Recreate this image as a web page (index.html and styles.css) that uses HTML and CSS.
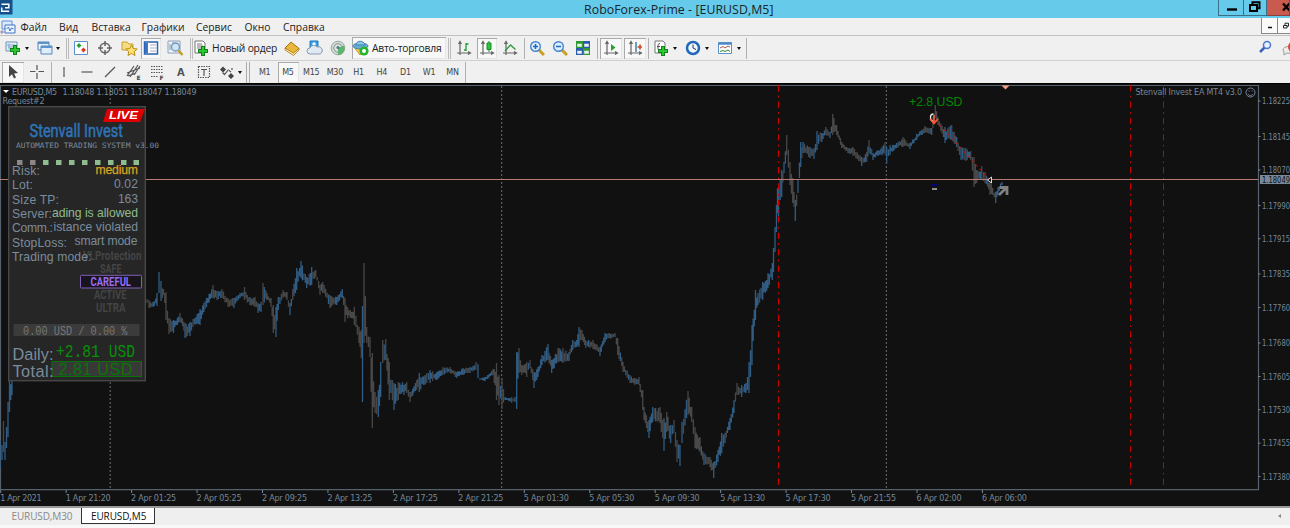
FILE: index.html
```html
<!DOCTYPE html>
<html lang="ru">
<head>
<meta charset="utf-8">
<title>RoboForex-Prime - [EURUSD,M5]</title>
<link rel="stylesheet" href="styles.css">
</head>
<body>
<header class="title">
  <svg class="logo" width="13" height="15" viewBox="0 0 13 15"><rect width="12.5" height="14.5" fill="#174f8c"/><path d="M1.500 4.200h7.300v3.600H5M1.700 12V7.500M1.700 11.200h7.500" fill="none" stroke="#fff" stroke-width="1.500"/></svg>
  <h1>RoboForex-Prime - [EURUSD,M5]</h1>
  <div class="winbtns">
    <span class="wb min"><svg width="24" height="16"><path d="M8 9.500h10" stroke="#000" stroke-width="2.400"/></svg></span>
    <span class="wb max"><svg width="22" height="16"><path d="M6 5h7v6h-7zM8.500 4V2.300h7v6H13" fill="none" stroke="#000" stroke-width="2"/></svg></span>
    <span class="wb close"><svg width="26" height="16"><path d="M16 3.500l6.500 7M22.500 3.500l-6.500 7" stroke="#000" stroke-width="2.300"/></svg></span>
  </div>
</header>
<nav class="menu">
  <svg width="16" height="16" viewBox="0 0 16 16"><path d="M2 2h10v8H2z" fill="#dceafc" stroke="#5b8ed6"/><path d="M5 6h10v8H5z" fill="#eef5ff" stroke="#3f74c4"/><path d="M6.500 10l2-2 1.500 4 1.500-3 2 1" fill="none" stroke="#3f74c4"/><path d="M0 13h4M2 11v4" stroke="#88a"/></svg>
  <span>Файл</span><span>Вид</span><span>Вставка</span><span>Графики</span><span>Сервис</span><span>Окно</span><span>Справка</span>
  <div class="mdi"><i><svg width="16" height="15"><path d="M6 9.500h4" stroke="#111" stroke-width="1.500"/></svg></i><i><svg width="20" height="15"><path d="M5.500 7.500h3.500v2.500H5.500zM7 7V5.200h3.500v3H9" fill="none" stroke="#222"/></svg></i></div>
</nav>
<div class="bar">
  <span class="c w3"></span>
  <span class="c w20"><svg width="18" height="16"><path d="M2 2h11v9H2z" fill="#e4f0fa" stroke="#6d94b8"/><path d="M3 5h8M4 7h5M5 3.500v6" stroke="#88a8c8"/><path d="M11 5v10M6 10h10" stroke="#14801c" stroke-width="4"/><path d="M11 6v8M7 10h8" stroke="#2cc832" stroke-width="2"/></svg></span>
  <span class="c w8"><b class="dd"></b></span><span class="c w5"></span>
  <span class="c w18"><svg width="16" height="16"><path d="M1 2h11v8H1z" fill="#eaf3fc" stroke="#5287bd"/><path d="M4 6h11v8H4z" fill="#e1edf9" stroke="#5287bd"/><path d="M1 3h11M4 7h11" stroke="#5c94cc" stroke-width="2"/></svg></span>
  <span class="c w8"><b class="dd"></b></span><span class="c w11"><b class="sep dbl"></b></span>
  <span class="c w16"><svg width="16" height="16"><path d="M1.500 1.500h13v13h-13z" fill="#fff" stroke="#5b91d0"/><path d="M6 3l2.500 2.500L6 8 3.500 5.500z" fill="#1da62b"/><path d="M10.500 7.500L13 10l-2.500 2.500L8 10z" fill="#dc3a24"/></svg></span>
  <span class="c w4"></span>
  <span class="c w24"><svg width="16" height="16"><circle cx="8" cy="8" r="4.800" fill="none" stroke="#666" stroke-width="1.500"/><path d="M8 1v5M8 10v5M1 8h5M10 8h5" stroke="#666" stroke-width="1.500"/></svg></span>
  <span class="c w24"><svg width="18" height="16"><path d="M2 2h5l2 2h4v6H2z" fill="#f4dc80" stroke="#c9a030"/><path d="M11.500 5l1.700 3.500 4 .5-3 2.600.8 3.900-3.500-2-3.500 2 .8-3.900-3-2.600 4-.5z" fill="#ffe26a" stroke="#b88c1c"/></svg></span>
  <span class="c w20 on"><svg width="16" height="16"><path d="M1.500 2h13v12h-13z" fill="#fff" stroke="#2962ae" stroke-width="1.500"/><path d="M3.500 3v10" stroke="#3a76c8" stroke-width="3"/><path d="M7 5h6M7 8h6M7 11h6" stroke="#aac"/></svg></span>
  <span class="c w28"><svg width="18" height="16"><path d="M2 1h12v12H2z" fill="#eef4fa" stroke="#8aa0b8"/><path d="M4 4v6M7 2v5" stroke="#79a"/><circle cx="9.500" cy="7" r="4" fill="#cfe4f4" stroke="#6f94b6" stroke-width="1.300"/><path d="M12.500 10.500l4 4.500" stroke="#c79a20" stroke-width="2.500"/></svg></span>
  <span class="c w4"><b class="sep dbl"></b></span>
  <span class="c w16"><svg width="16" height="16"><path d="M2 1h8l2 2v10H2z" fill="#fff" stroke="#777"/><path d="M4 4h5M4 6h6M4 8h4" stroke="#777"/><path d="M10 6v10M5 11h10" stroke="#14801c" stroke-width="4"/><path d="M10 7v8M6 11h8" stroke="#2cc832" stroke-width="2"/></svg></span>
  <span class="c w72 label order">Новый ордер</span>
  <span class="c w22"><svg width="16" height="16"><path d="M1 8l6-6 8 6.500L9.500 14z" fill="#e9b73c" stroke="#a87412"/><path d="M1 8v2l8.500 5.500L15 10V8.500L9.500 13z" fill="#fbe6a4" stroke="#a87412" stroke-width=".8"/></svg></span>
  <span class="c w24"><svg width="18" height="16"><path d="M4 1h8v7H4z" fill="#36a0e8" stroke="#1d78c4"/><circle cx="8" cy="4" r="1.700" fill="#fff"/><path d="M4 14a3 3 0 0 1 0-6 4 4 0 0 1 7-1 3.500 3.500 0 0 1 3 7z" fill="#e0e8f1" stroke="#8b9db4"/></svg></span>
  <span class="c w22"><svg width="16" height="16"><circle cx="8" cy="8" r="6.800" fill="#d4dcd8" stroke="#98a4a0"/><circle cx="8" cy="8" r="4.200" fill="#dde4df" stroke="#7f908a"/><path d="M8 8v7c3.500 0 6.500-2.500 6.500-6.500 0-1-.3-2-.8-3z" fill="#5db56c"/><circle cx="8" cy="7.500" r="1.600" fill="#4c7c88"/></svg></span>
  <span class="c w3"></span>
  <span class="auto on"><svg width="18" height="16"><path d="M2 7l6 8 7-7z" fill="#f6d04c" stroke="#c49a2c"/><ellipse cx="8.500" cy="6" rx="7.500" ry="3" fill="#6aacd6" stroke="#3f82ae"/><path d="M4 5c0-5 8-5 9 0z" fill="#8cc6e6" stroke="#3f82ae"/><circle cx="12" cy="11" r="4.600" fill="#25b52e"/><circle cx="12" cy="11" r="2" fill="#fff"/></svg><em>Авто-торговля</em></span>
  <span class="c w6"><b class="sep dbl"></b></span>
  <span class="c w24"><svg width="16" height="16"><path d="M4 2v13M1 13h13M2.500 4L4 1.500 5.500 4M12 11.500L14.500 13 12 14.500" class="ax"/><path d="M10 3v8M10 4h2.500M8 10h2" stroke="#219c2d" fill="none" stroke-width="1.300"/></svg></span>
  <span class="c w1"></span>
  <span class="c w20 on"><svg width="16" height="16"><path d="M4 2v13M1 13h13M2.500 4L4 1.500 5.500 4M12 11.500L14.500 13 12 14.500" class="ax"/><path d="M10 1v11" stroke="#198a25"/><path d="M8 3h4v6.500H8z" fill="#2bc63a" stroke="#198a25"/></svg></span>
  <span class="c w26"><svg width="16" height="16"><path d="M4 2v13M1 13h13M2.500 4L4 1.500 5.500 4M12 11.500L14.500 13 12 14.500" class="ax"/><path d="M3 11L8.500 5l5 4.500" stroke="#2c9a38" fill="none" stroke-width="1.300"/></svg></span>
  <span class="c w3"><b class="sep"></b></span>
  <span class="c w22"><svg width="16" height="16"><path d="M10 10l5 5" stroke="#c99e24" stroke-width="3"/><circle cx="6.500" cy="6.500" r="4.800" fill="#dcefff" stroke="#3f82cc" stroke-width="1.400"/><path d="M4 6.500h5M6.500 4v5" stroke="#2466ba" stroke-width="1.500"/></svg></span>
  <span class="c w24"><svg width="16" height="16"><path d="M10 10l5 5" stroke="#c99e24" stroke-width="3"/><circle cx="6.500" cy="6.500" r="4.800" fill="#dcefff" stroke="#3f82cc" stroke-width="1.400"/><path d="M4 6.500h5" stroke="#2466ba" stroke-width="1.500"/></svg></span>
  <span class="c w22"><svg width="16" height="16"><path d="M1 1h7v7H1zM8 8h7v7H8z" fill="#2f9a2f"/><path d="M8 1h7v7H8zM1 8h7v7H1z" fill="#2a5cae"/><path d="M2.200 3.800h4.600v3H2.200zM9.200 3.800h4.600v3H9.200zM2.200 10.800h4.600v3H2.200zM9.200 10.800h4.600v3H9.200z" fill="#e8f2f4"/></svg></span>
  <span class="c w6"><b class="sep"></b></span>
  <span class="c w22 on"><svg width="16" height="16"><path d="M4 2v13M1 13h13M2.500 4L4 1.500 5.500 4M12 11.500L14.500 13 12 14.500" class="ax"/><path d="M8 4l4.500 3.500L8 11z" fill="#22a530"/></svg></span>
  <span class="c w2"></span>
  <span class="c w22 on"><svg width="16" height="16"><path d="M4 2v13M1 13h13M2.500 4L4 1.500 5.500 4M12 11.500L14.500 13 12 14.500" class="ax"/><path d="M9 2v10" stroke="#246ba0" stroke-width="1.300"/><path d="M15 7h-4.500M13 4.500v5" stroke="#cf4a20" fill="none" stroke-width="1.600"/></svg></span>
  <span class="c w5"><b class="sep"></b></span>
  <span class="c w20"><svg width="16" height="16"><path d="M2 1h8l2 2v10H2z" fill="#fff" stroke="#777"/><path d="M7 3.500c-2 0-2 1-2 3v3M4 6.500h3" stroke="#555" fill="none"/><path d="M10 6v10M5 11h10" stroke="#14801c" stroke-width="4"/><path d="M10 7v8M6 11h8" stroke="#2cc832" stroke-width="2"/></svg></span>
  <span class="c w7"><b class="dd"></b></span><span class="c w4"></span>
  <span class="c w22"><svg width="16" height="16"><circle cx="8" cy="8" r="6" fill="#eef6ff" stroke="#2367b8" stroke-width="2.500"/><path d="M8 4.500V8l3 1.500" fill="none" stroke="#333"/></svg></span>
  <span class="c w5"><b class="dd"></b></span><span class="c w5"></span>
  <span class="c w22"><svg width="16" height="16"><path d="M1.500 2.500h13v11h-13z" fill="#fff" stroke="#5a92c8"/><path d="M1.500 3.500h13" stroke="#4f8bc8" stroke-width="2.500"/><path d="M3 8l3-1.500 2 1.500 3-2 2 1" stroke="#a54" fill="none"/><path d="M3 11.500l3-1 2 1 3-1.500 2 1.500" stroke="#383" fill="none"/></svg></span>
  <span class="c w5"><b class="dd"></b></span><span class="c w5"></span><span class="c w1"><b class="sep"></b></span>
  <div class="right"><svg width="40" height="18"><path d="M3 13l5-5" stroke="#3a62b8" stroke-width="2.500"/><circle cx="10" cy="6" r="3.500" fill="#e8f0ff" stroke="#4a76cc" stroke-width="1.500"/><path d="M27 13v3l3-2c5 1 8-1 8-4-3-4-12-3-12 1z" fill="#eee" stroke="#999"/><circle cx="37" cy="8" r="6" fill="#e2452c"/></svg></div>
</div>
<div class="bar second">
  <span class="c w2"></span>
  <span class="c w22 on"><svg width="16" height="16"><path d="M4 1v12l3-2.800 2 4.300 2-1-2-4 4-.5z" fill="#444"/></svg></span>
  <span class="c w26"><svg width="16" height="16"><path d="M8 1v5M8 9v6M1 7.500h5.500M9.500 7.500H15" class="g"/></svg></span>
  <span class="c w2"><b class="sep"></b></span>
  <span class="c w23"><svg width="16" height="16"><path d="M8 3v10" class="g"/></svg></span>
  <span class="c w23"><svg width="16" height="16"><path d="M2.500 8h11" class="g"/></svg></span>
  <span class="c w23"><svg width="16" height="16"><path d="M3 13L13 3" class="g"/></svg></span>
  <span class="c w23"><svg width="16" height="16"><path d="M1 12L8 2M4 13L12 1M8 11l6-9M1 9l13-5M2 12l8-3" class="g"/><text x="10.500" y="16" class="tiny">E</text></svg></span>
  <span class="c w24"><svg width="16" height="16"><path d="M2 2.500h12M2 5.500h12M2 8.500h12M2 12.500h7" class="g dot"/><text x="10.500" y="16" class="tiny">F</text></svg></span>
  <span class="c w23 abc">A</span>
  <span class="c w23"><svg width="16" height="16"><path d="M2.500 2.500h11v11h-11z" class="g dot"/><path d="M5 5.500h6M8 5v7" class="g" stroke-width="2"/></svg></span>
  <span class="c w22"><svg width="16" height="16"><path d="M4 2.500l3 3-3 3-3-3zM12 9l3 3-3 3-3-3z" fill="#444"/><path d="M3.500 8.500l2 2 4-5M10 6.500l2 1.500M13 4v2" class="g"/></svg></span>
  <span class="c w5"><b class="dd"></b></span>
  <span class="c w11"><b class="sep wide"></b></span>
  <span class="c w23 tf">M1</span><span class="c w23 tf on">M5</span><span class="c w23 tf">M15</span><span class="c w24 tf">M30</span><span class="c w23 tf">H1</span><span class="c w23 tf">H4</span><span class="c w24 tf">D1</span><span class="c w23 tf">W1</span><span class="c w23 tf">MN</span>
  <b class="sep"></b>
</div>
<main class="chartwrap">
<svg class="chart" width="1290" height="423" viewBox="0 83 1290 423">
  <rect x="0" y="83" width="1290" height="423" fill="#111"/>
  <path d="M0 83.500h1290" stroke="#000"/>
  <path d="M0.500 490V85.500H1258.500V490M0 489.700H1259" fill="none" stroke="#55616d" stroke-width="1.200"/>
  <g fill="none" stroke="#64707c" stroke-dasharray="2 2"><path d="M110.200 86V489M501.700 86V489M886.300 86V489"/></g>
  <g id="bars"></g>
  <g fill="none" stroke="#c80000" stroke-dasharray="6.400 4.200 1.800 4"><path d="M778.500 85V489" stroke-width="1.200"/><path d="M1130.500 85V489"/><path d="M1163.500 85V489"/></g>
  <path d="M0 179.500H1258" stroke="#b97a74"/>
  <g id="axes"></g>
  <rect x="1260" y="175" width="30" height="9" fill="#778899"/>
  <text class="ct current" x="1262" y="182.500" textLength="28" lengthAdjust="spacingAndGlyphs">1.18049</text>
  <path d="M3 90h6l-3 3z" fill="#fff"/>
  <text class="ct" x="12" y="95" textLength="45">EURUSD,M5</text>
  <text class="ct" x="62.500" y="95" textLength="134">1.18048 1.18051 1.18047 1.18049</text>
  <text class="ct" x="2.500" y="103.500" textLength="42">Request#2</text>
  <text class="ct" x="1135.500" y="95.300" textLength="106.500">Stenvall Invest EA MT4 v3.0</text>
  <g fill="none" stroke="#778899"><circle cx="1250.500" cy="92.500" r="4.500"/><path d="M1248 94c1 2 4 2 5 0M1248.500 91h1M1251.500 91h1"/></g>

  <g class="panel">
    <rect x="8.700" y="106.700" width="136.600" height="274" fill="#262626" stroke="#484848" stroke-width="1.400"/>
    <path d="M107 109h38l-5 13h-37z" fill="#dc0000"/>
    <text x="109" y="119.300" textLength="29" lengthAdjust="spacingAndGlyphs" font-size="11.500" class="live">LIVE</text>
    <text x="29.500" y="137.200" textLength="93.500" lengthAdjust="spacingAndGlyphs" class="brand">Stenvall Invest</text>
    <text x="16" y="148" textLength="143" class="mono caption" lengthAdjust="spacingAndGlyphs">AUTOMATED TRADING SYSTEM v3.00</text>
    <g fill="#8c8686"><path d="M17 160h5.500v5H17zM30 160h5.500v5H30z"/></g>
    <path d="M43 160h5.500v5H43zM56 160h5.500v5H56zM69 160h5.500v5H69zM82 160h5.500v5H82zM95 160h5.500v5H95zM108 160h5.500v5H108zM121 160h5.500v5H121zM133.500 160h5.500v5h-5.500z" fill="#8fbc8f"/>
    <g font-size="12.200">
      <text x="12" y="174.700" textLength="28">Risk:</text><text x="12" y="189" textLength="21">Lot:</text><text x="12" y="203.500" textLength="47">Size TP:</text><text x="12" y="217.800" textLength="40">Server:</text><text x="12" y="232.300" textLength="41">Comm.:</text><text x="12" y="246.500" textLength="55">StopLoss:</text>
    </g>
    <g font-size="12.200" text-anchor="end">
      <text x="138" y="173.500" textLength="42.500" class="warn">medium</text><text x="138" y="188" textLength="24">0.02</text><text x="138" y="202.500" textLength="20">163</text><text x="138" y="216.500" textLength="86" class="ok">ading is allowed</text><text x="138" y="230.800" textLength="84.500">istance violated</text><text x="137.500" y="245.200" textLength="63">smart mode</text>
    </g>
    <g class="mode">
      <text x="83" y="259.700" textLength="58.500" lengthAdjust="spacingAndGlyphs">VLProtection</text>
      <text x="100" y="273" textLength="21.500" lengthAdjust="spacingAndGlyphs">SAFE</text>
      <rect x="80.500" y="275.300" width="61" height="12.700" rx="1" fill="#17151b" stroke="#8060b8"/>
      <text x="90.500" y="286" textLength="40.500" lengthAdjust="spacingAndGlyphs" class="chosen">CAREFUL</text>
      <text x="94" y="299" textLength="32.500" lengthAdjust="spacingAndGlyphs">ACTIVE</text>
      <text x="96" y="312" textLength="29.500" lengthAdjust="spacingAndGlyphs">ULTRA</text>
    </g>
    <text x="12" y="261" textLength="79.500" font-size="12.200">Trading mode:</text>
    <rect x="13.500" y="324" width="126" height="12" fill="#3b3b3b"/>
    <text x="23" y="334.500" textLength="104.500" lengthAdjust="spacingAndGlyphs" class="mono float" font-size="13">0.00 USD / 0.00 %</text>
    <rect x="52" y="361.500" width="89.500" height="15" fill="#383838" stroke="#087408"/>
    <text x="12.500" y="359.500" textLength="41" font-size="16.300">Daily:</text>
    <text x="12.500" y="376.500" textLength="41" font-size="16.300">Total:</text>
    <text x="56" y="357" textLength="79" lengthAdjust="spacingAndGlyphs" class="mono gain" font-size="18.500">+2.81 USD</text>
    <text x="58.500" y="374.800" textLength="74" font-size="16.300" class="total">2.81 USD</text>
  </g>

  <text x="909" y="105.500" textLength="53.500" font-size="12.300" class="profit">+2.8 USD</text>
  <path d="M935 120L990 180" stroke="#d01010" stroke-dasharray="3 3"/>
  <path d="M933.500 114c-4 0-4 7 0 7" fill="none" stroke="#eee" stroke-width="1.300"/>
  <path d="M934 115v8M930 119l4 4.500 4-4.500" fill="none" stroke="#ff5a32" stroke-width="1.600"/>
  <path d="M991.500 177v6l-4-3z" fill="#111" stroke="#ddd"/>
  <path d="M999 195l7-7M999.500 187.500h7.500v7.500" fill="none" stroke="#808080" stroke-width="2.800"/>
  <path d="M932 185h5" stroke="#0000a0" stroke-width="1.500"/><path d="M932 189h5" stroke="#bbb" stroke-width="1.500"/>
  <path d="M1001.500 85.500h8l-4 4z" fill="#f4a284"/>
</svg>
</main>
<footer class="tabs"><span class="tab">EURUSD,M30</span><span class="tab active">EURUSD,M5</span><b class="scroll"></b></footer>
<script src="chart.js"></script>
</body>
</html>
```
FILE: styles.css
```css
* { box-sizing: border-box; }
body { margin: 0; width: 1290px; height: 528px; overflow: hidden; background: #f0f0f0; font-family: "Open Sans", "Noto Sans", sans-serif; color: #222; display: flex; flex-direction: column; }
svg { display: block; flex: none; }
.title { height: 18px; background: #66cbea; display: flex; align-items: flex-start; flex: none; }
.title h1 { flex: 1; margin: 0 0 0 104px; padding-left: 467px; font-size: 12.3px; font-weight: 400; line-height: 19px; white-space: nowrap; color: #17242a; letter-spacing: .07px; }
.winbtns { display: flex; flex: none; height: 16px; border-left: 1px solid #38708a; }
.wb { border-right: 1px solid #38708a; border-bottom: 1px solid #38708a; height: 16px; overflow: hidden; }
.close { background: #c85a50; border-color: #8e403a; width: 23px; }
.menu { height: 18px; flex: none; display: grid; grid-template-columns: 20.500px 38.500px 32.500px 50px 54.500px 48.500px 38.500px 60px 1fr; align-items: center; font-size: 10.300px; white-space: nowrap; border-bottom: 1px solid #c0c0c0; }
.mdi { display: flex; justify-self: end; height: 17px; }
.mdi i { border: 1px solid #888; border-top: 0; background: #fafafa; height: 16px; margin-left: -1px; width: 17px; overflow: hidden; }
.mdi i:last-child { width: 22px; margin-right: -9px; }
.mdi i:first-child { width: 17px; }
.bar { height: 24px; flex: none; display: flex; align-items: center; background: #f0f0f0; }
.bar.second { height: 23px; border-top: 1px solid #d0d0d0; }
.c { flex: none; display: flex; justify-content: center; align-items: center; height: 21px; }
.on { background: #f8f8f8; box-shadow: inset 1px 1px #aaa, inset -1px -1px #e4e4e4; }
.w1 { width: 1px; } .w2 { width: 2px; } .w3 { width: 3px; } .w4 { width: 4px; } .w5 { width: 5px; } .w6 { width: 6px; } .w7 { width: 7px; } .w8 { width: 8px; }
.w11 { width: 11px; } .w16 { width: 16px; } .w18 { width: 18px; } .w20 { width: 20px; } .w22 { width: 22px; } .w23 { width: 23.300px; } .w24 { width: 24px; } .w26 { width: 26px; } .w28 { width: 28px; } .w72 { width: 72px; }
.dd { flex: none; border: 2.500px solid transparent; border-top: 3px solid #111; border-bottom: 0; }
.sep { flex: none; width: 1px; height: 21px; background: #b0b0b0; }
.sep.dbl { width: 3px; background: none; border-left: 1px solid #bbb; border-right: 1px solid #bbb; }
.sep.wide { width: 4px; background: none; border-left: 1px solid #aaa; border-right: 1px solid #aaa; }
.label, .auto { font-size: 10.300px; white-space: nowrap; }
.order { justify-content: flex-start; padding-left: 3px; letter-spacing: -.2px; }
.auto { width: 94px; height: 22px; flex: none; display: flex; align-items: center; }
.auto em { font-style: normal; margin-left: 2px; letter-spacing: -.22px; }
.right { margin-left: auto; width: 33px; overflow: hidden; }
.ax { fill: none; stroke: #666; stroke-width: 1.2px; }
.g { fill: none; stroke: #555; stroke-width: 1.2px; }
.dot { stroke-dasharray: 1.500 1; }
.tiny { font: bold 6px "DejaVu Sans", sans-serif; fill: #444; }
.abc { font: bold 10px "DejaVu Sans", sans-serif; color: #555; }
.tf { font: 8px "DejaVu Sans", sans-serif; color: #444; letter-spacing: -.2px; padding-right: 1.500px; }
.tf.on { width: 21px; margin: 0 1.150px; }
.chartwrap { height: 423px; flex: none; }
.ct { font: 8px "DejaVu Sans", sans-serif; fill: #778899; }
.ct.current { fill: #111; }
.panel text { font-family: "Liberation Sans", Arial, sans-serif; fill: #7b8c9d; }
.panel .live { fill: #fff; font-weight: bold; font-style: italic; }
.panel .warn { fill: #daa520; stroke: #daa520; stroke-width: .25px; }
.panel .ok { fill: #8fbc8f; }
.panel .brand { font: 400 18px Roboto, sans-serif; fill: #2e74b8; stroke: #2e74b8; stroke-width: .5px; }
.panel .mono { font-family: "Liberation Mono", monospace; }
.panel .caption { font: 7.500px "DejaVu Sans Mono", monospace; }
.panel .float { fill: #777; }
.panel .gain { fill: #089008; }
.panel .total { fill: #087408; }
.panel .mode text { font: bold 13px Roboto, sans-serif; fill: #444; }
.panel .mode .chosen { fill: #9a6cf0; }
.profit { font-family: "Liberation Sans", Arial, sans-serif; fill: #008a00; }
.tabs { height: 22px; flex: none; background: #efefef; border-top: 2px solid #999; box-shadow: inset 0 -3px #f8f8f8; display: flex; align-items: flex-start; font-size: 10px; color: #888; letter-spacing: -.12px; }
.tab { height: 16px; line-height: 17px; width: 81px; padding-left: 11.500px; white-space: nowrap; }
.tab.active { width: 74px; padding-left: 9px; background: #fff; color: #111; border: 1px solid #333; border-top: 0; }
.scroll { margin: 6px 9px 0 auto; border: 2.500px solid transparent; border-right: 3px solid #888; border-left: 0; }
```
FILE: chart.js
```js
// Price envelope: x, high, low (canvas coordinates)
const range = `0 440 468;2 445 460;3.5 421 452;5 442 460;6.5 427 448;8 402 437;9.5 380 412;12 380 395;13.5 380 399;
147 299 303;149 300 308;153 302 307;157 293 306;159 272 293;161 281 301;163.500 289 295;166 292 320;169 318 334;173.500 320 333;180 313 322;185 323 338;190 322 336;193 319 327;200 309 325;206.500 298 307;213 285 298;217 291 300;222 289 298;228 298 307;234 298 308;240 293 298;244.500 287 300;250 297 305;255 297 307;258 303 313;261 302 312;263 283 305;267 293 300;271 298 307;273.300 305 333;276 307 337;278.300 297 310;283 290 298;287 292 300;290 303 315;292.700 289 300;296.700 268 290;301 261 278;306.700 277 288;311.700 267 285;315.700 270 277;320 285 295;322.700 282 293;330 295 308;336.700 297 305;342.300 289 298;345 298 322;351.700 312 318;354.300 307 325;359 327 343;361.300 330 358;362.500 306 402;364 263 343;366.700 327 343;370 337 357;372.300 353 428;375 392 413;378.300 390 417;380.700 362 397;382.700 340 363;385.700 339 360;389.300 362 400;394 383 410;398.300 382 400;406.700 382 393;410 392 402;416.700 380 390;419.300 373 392;426.700 373 383;430 370 383;436.700 372 380;443 367 375;450 367 373;456.700 372 378;463 368 375;470 367 373;476 362 370;478 364 378;480 378 380;485 377 381;493 369 375;496.500 363 400;499 375 405;502 378 409;505 397 400;511.700 397 403;515 397 402;516.700 352 409;519 348 373;521.700 365 375;526.700 362 377;530 360 368;534 372 388;538 367 377;542 355 365;548 344 360;551.700 360 373;558 348 362;563 348 363;569 352 361;572.700 340 350;576.700 340 347;579 327 347;582 330 340;585.700 340 348;593 340 349;600 347 356;605 333 342;615 333 337;617.700 338 355;623 362 372;630 375 383;635 378 385;639 377 385;642.700 390 410;644 407 420;649 420 438;652.700 407 422;660 407 423;664 418 451;666.700 412 432;670.700 425 443;674 420 433;677 440 462;680 445 466;682 422 443;688 391 415;691.700 407 422;695 427 448;700 437 452;704 453 465;710 457 467;713.700 462 478;718 450 462;721.700 433 453;725 433 443;730 418 430;734 400 413;737 383 395;741.700 385 397;746 383 393;749 362 393;752 325 365;755.500 290 320;758 293 305;762.700 282 300;768 273 288;772.300 263 280;773.500 248 272;775 227 252;776.500 205 232;777.500 188 213;778.600 187 216;781.700 170 197;784 162 173;786.700 135 155;790 162 185;792.700 178 203;795.300 200 221;798 180 193;800.700 142 167;803 142 153;810 147 158;814 148 159;817 131 150;821.700 133 142;825.700 127 135;830 132 138;832.700 114 135;836.700 125 135;841.700 142 148;848 148 153;853 147 156;861.700 157 166;866.700 152 162;869 140 153;873 153 160;878 150 156;885 142 155;886.700 147 163;890 145 155;896.700 143 148;903 137 147;910 143 149;916.700 134 140;925 126 133;931.700 128 135;933 117 128;935.300 105 118;938 117 125;945 127 143;951.700 125 140;956.700 137 147;961 147 160;965.700 148 161;970.700 151 160;974 157 187;976.700 170 183;981.700 166 180;985 172 183;990 180 195;992.700 188 195;995.700 192 203;998 187 195;1003.300 178 183`
  .split(';').map(p => p.trim().split(' ').map(Number));

const NS = 'http://www.w3.org/2000/svg';
function add(parent, tag, attrs, text) {
  const el = document.createElementNS(NS, tag);
  for (const k in attrs) el.setAttribute(k, attrs[k]);
  if (text) el.textContent = text;
  parent.appendChild(el);
}
let seed = 11;
const rnd = () => (seed = (seed * 16807) % 2147483647) / 2147483647;

let up = '', down = '';
const STEP = 1.364;
for (let i = 0; i < range.length - 1; i++) {
  const [x0, h0, l0] = range[i], [x1, h1, l1] = range[i + 1];
  if (x0 < 14 && x1 > 140) continue;
  const n = Math.max(1, Math.round((x1 - x0) / STEP));
  for (let k = 0; k < n; k++) {
    const t = k / n, size = (l0 + (l1 - l0) * t) - (h0 + (h1 - h0) * t);
    const j = k ? size * 0.32 : 0;
    const top = h0 + (h1 - h0) * t + j * rnd(), bottom = l0 + (l1 - l0) * t - j * rnd();
    const x = (x0 + (x1 - x0) * t).toFixed(1);
    const slope = (h1 + l1) - (h0 + l0);
    const seg = `M${x} ${top.toFixed(1)}V${bottom.toFixed(1)}`;
    if (rnd() < 0.5 - Math.max(-0.4, Math.min(0.4, slope / 22))) up += seg; else down += seg;
  }
}
const bars = document.getElementById('bars');
add(bars, 'path', { d: down, stroke: '#484848', 'stroke-width': 1.3 });
add(bars, 'path', { d: up, stroke: '#315d84', 'stroke-width': 1.3 });

const axes = document.getElementById('axes');
const times = ['1 Apr 2021', '1 Apr 21:20', '2 Apr 01:25', '2 Apr 05:25', '2 Apr 09:25', '2 Apr 13:25', '2 Apr 17:25', '2 Apr 21:25', '5 Apr 01:30', '5 Apr 05:30', '5 Apr 09:30', '5 Apr 13:30', '5 Apr 17:30', '5 Apr 21:55', '6 Apr 02:00', '6 Apr 06:00'];
times.forEach((t, i) => {
  const x = 0.7 + i * 65.45;
  add(axes, 'path', { d: `M${x} 490v3`, stroke: '#778899' });
  add(axes, 'text', { class: 'ct', x: x - 0.5, y: 500.7, textLength: i ? 45 : 41.5 }, t);
});
const prices = [['1.18225', 101], ['1.18145', 136.5], ['1.18070', 170], ['1.17990', 205.5], ['1.17915', 238.7], ['1.17835', 274], ['1.17760', 307.5], ['1.17680', 343], ['1.17605', 376.5], ['1.17530', 409.7], ['1.17455', 443.2], ['1.17380', 476.5]];
prices.forEach(([p, y]) => {
  add(axes, 'path', { d: `M1258 ${y}h2.500`, stroke: '#778899' });
  add(axes, 'text', { class: 'ct', x: 1262, y: y + 3, textLength: 28, lengthAdjust: 'spacingAndGlyphs' }, p);
});
```
